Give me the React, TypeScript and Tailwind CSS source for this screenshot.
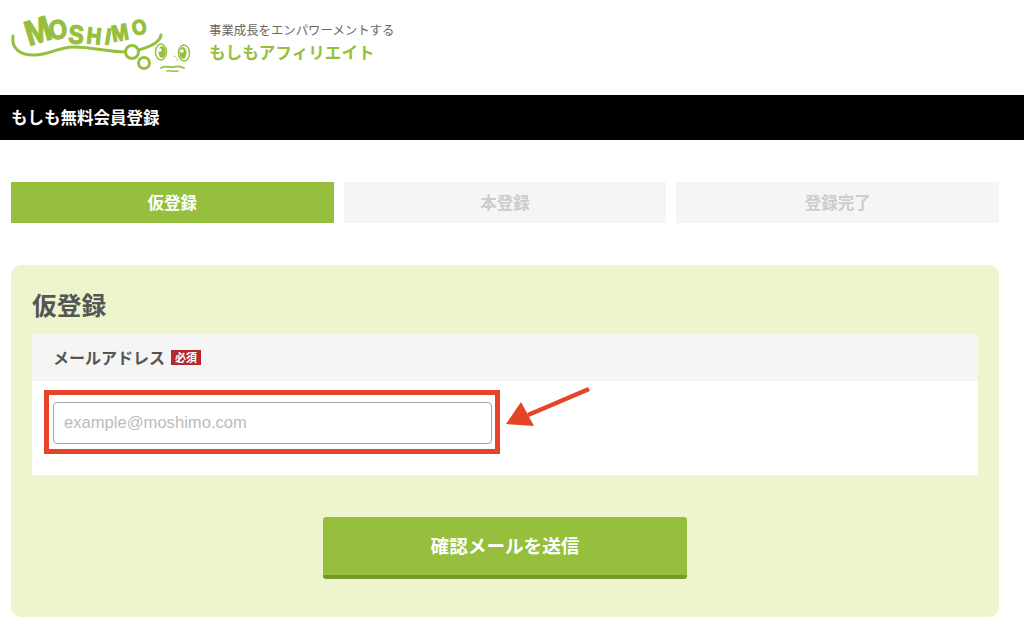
const jp = 'font-["Noto_Sans_CJK_JP","Liberation_Sans",sans-serif]';

const logoLetters: Array<{ ch: string; x: number; y: number; r: number; s: number }> = [
  { ch: 'M', x: 29, y: 46, r: -17, s: 35 },
  { ch: 'O', x: 50, y: 40, r: -8, s: 27 },
  { ch: 'S', x: 68, y: 43, r: 4, s: 26 },
  { ch: 'H', x: 86, y: 43, r: 6, s: 23 },
  { ch: 'I', x: 104, y: 44, r: 10, s: 23 },
  { ch: 'M', x: 113, y: 42, r: -10, s: 23 },
  { ch: 'O', x: 134, y: 36, r: -14, s: 21 },
];

function Logo() {
  return (
    <svg width="200" height="80" viewBox="0 0 200 80" className="shrink-0">
      {logoLetters.map((l, i) => (
        <text
          key={i}
          fontSize={l.s}
          fontWeight="700"
          fontFamily="Liberation Sans, sans-serif"
          fill="#95bf3d"
          stroke="#95bf3d"
          strokeWidth="1.3"
          transform={`translate(${l.x} ${l.y}) rotate(${l.r}) scale(0.88 1)`}
        >
          {l.ch}
        </text>
      ))}
      <path
        d="M13 36 C11 48 20 56 36 55 C52 54 58 47 74 47 C92 47 108 52 126 52"
        fill="none"
        stroke="#95bf3d"
        strokeWidth="3"
        strokeLinecap="round"
      />
      <path d="M138 50 C150 47 160 42 161 35" fill="none" stroke="#95bf3d" strokeWidth="3" strokeLinecap="round" />
      <circle cx="132" cy="52" r="6.5" fill="#fff" stroke="#95bf3d" strokeWidth="3" />
      <circle cx="144" cy="63" r="5.5" fill="#fff" stroke="#95bf3d" strokeWidth="3" />
      <ellipse cx="161" cy="52" rx="5.5" ry="8" fill="#fff" stroke="#95bf3d" strokeWidth="1.5" />
      <ellipse cx="162" cy="52" rx="3.5" ry="6" fill="#95bf3d" />
      <circle cx="160" cy="50" r="1.8" fill="#fff" />
      <ellipse cx="184" cy="53" rx="5.5" ry="8" fill="#fff" stroke="#95bf3d" strokeWidth="1.5" />
      <ellipse cx="183" cy="53" rx="3.5" ry="6" fill="#95bf3d" />
      <circle cx="182" cy="51" r="1.8" fill="#fff" />
      <path d="M161 68 C166 65 170 68 174 67 C177 66 180 66 184 68" fill="none" stroke="#95bf3d" strokeWidth="1.8" strokeLinecap="round" />
      <path d="M167 71 C170 70 174 72 178 71" fill="none" stroke="#95bf3d" strokeWidth="1.5" strokeLinecap="round" />
      <path d="M173 56 C176 56 178 58 177 61" fill="none" stroke="#bcd68a" strokeWidth="1" />
    </svg>
  );
}

export default function App() {
  return (
    <div className={`h-[633px] w-[1024px] overflow-hidden bg-white ${jp}`}>
      <header className="flex h-[95px] items-start">
        <Logo />
        <div className="ml-[9px] pt-[22px]">
          <p className="text-[12.4px] leading-[16px] text-[#666]">事業成長をエンパワーメントする</p>
          <p className="mt-[2px] text-[16.6px] font-bold leading-[24px] text-[#95bf3d]">もしもアフィリエイト</p>
        </div>
      </header>

      <div className="flex h-[45px] items-center bg-black pl-[11px] text-[16.5px] font-bold text-white">
        もしも無料会員登録
      </div>

      <div className="mt-[42px] ml-[11px] grid w-[988px] grid-cols-3 gap-[10px]">
        <div className="flex h-[41px] items-center justify-center bg-[#95bf3d] text-[16.5px] font-bold text-white">仮登録</div>
        <div className="flex h-[41px] items-center justify-center bg-[#f5f5f5] text-[16.5px] font-bold text-[#ccc]">本登録</div>
        <div className="flex h-[41px] items-center justify-center bg-[#f5f5f5] text-[16.5px] font-bold text-[#ccc]">登録完了</div>
      </div>

      <section className="mt-[42px] ml-[11px] h-[352px] w-[988px] rounded-[10px] bg-[#ecf5cb] px-[21px] pt-[21px]">
        <h1 className="text-[24.7px] font-bold leading-[36px] text-[#555]">仮登録</h1>
        <div className="mt-[12px]">
          <div className="flex h-[47px] items-center gap-[6px] bg-[#f5f5f5] pl-[21px]">
            <span className="pb-[2px] text-[16px] font-bold text-[#555]">メールアドレス</span>
            <span className="flex h-[15px] w-[30px] items-center justify-center bg-[#b5282c] text-[11px] font-bold leading-none text-white">必須</span>
          </div>
          <div className="relative h-[94px] bg-white pl-[12px] pt-[9px]">
            <div className="h-[64px] w-[456px] border-[5px] border-[#e64428] px-[4px] py-[7px]">
              <input
                readOnly
                placeholder="example@moshimo.com"
                className="h-[42px] w-[439px] rounded-[4px] border border-[#a5a5a5] bg-white px-[10px] font-['Liberation_Sans',sans-serif] text-[16.6px] outline-none placeholder:text-[#bbb]"
              />
            </div>
            <svg width="90" height="50" viewBox="0 0 90 50" className="absolute left-[472px] top-0">
              <path d="M85 8 L24 34" stroke="#e64428" strokeWidth="4.5" />
              <path d="M2 43 L17 21 L30 45 Z" fill="#e64428" />
            </svg>
          </div>
        </div>
        <div className="mt-[42px] flex justify-center">
          <button className="h-[62px] w-[364px] rounded-[3px] border-b-[4px] border-[#76992c] bg-[#95bf3d] pb-[3px] text-[18.6px] font-bold text-white">
            確認メールを送信
          </button>
        </div>
      </section>
    </div>
  );
}
